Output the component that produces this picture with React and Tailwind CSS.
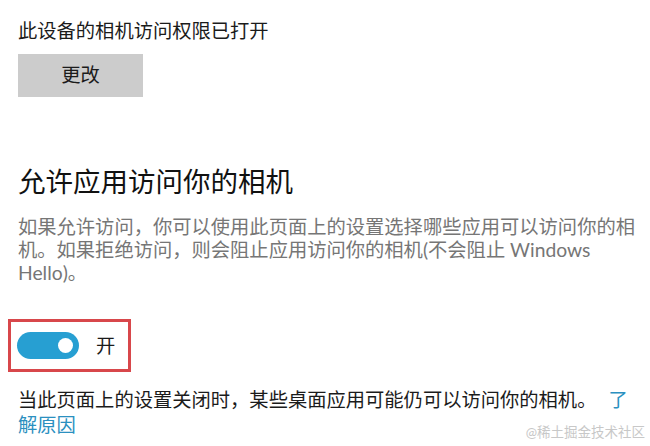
import React from 'react';

const FONT = "font-['Lato','Noto_Sans_CJK_SC',sans-serif]";

const Toggle = ({ on }) => (
  <div
    className={`flex items-center w-[62px] h-[27px] rounded-full px-[6px] ${
      on ? 'bg-[#279fd2] justify-end' : 'bg-white border-2 border-black justify-start'
    }`}
  >
    <div className="w-[15px] h-[15px] rounded-full bg-white" />
  </div>
);

const App = () => {
  return (
    <div className={`relative w-[650px] h-[446px] bg-white overflow-hidden ${FONT}`}>
      <div className="px-[18px] pt-[17px]">
        <p className="text-[19.3px] leading-[28px] text-[#1b1b1b]">此设备的相机访问权限已打开</p>
        <button className="mt-[9px] w-[125px] h-[43px] bg-[#cccccc] text-[19.3px] text-[#1b1b1b] flex items-center justify-center">
          更改
        </button>

        <h2 className="mt-[67px] text-[27.5px] leading-[36px] text-[#111111]">允许应用访问你的相机</h2>
        <p className="mt-[15px] w-[622px] text-[19.3px] leading-[23px] text-[#767676]">
          如果允许访问，你可以使用此页面上的设置选择哪些应用可以访问你的相机。如果拒绝访问，则会阻止应用访问你的相机(不会阻止 Windows Hello)。
        </p>

        <div className="mt-[35px] -ml-[10px] w-[123px] h-[53px] border-[3px] border-[#d8474b] flex items-center pl-[6px]">
          <Toggle on />
          <span className="ml-[17px] text-[19.3px] leading-none text-[#1b1b1b]">开</span>
        </div>

        <p className="mt-[15px] w-[622px] text-[19.3px] leading-[25px] text-[#1b1b1b]">
          当此页面上的设置关闭时，某些桌面应用可能仍可以访问你的相机。
          <a href="#" className="ml-[12px] text-[#2b90c0]">
            <span>了</span><span>解原因</span>
          </a>
        </p>
      </div>

      <span className="absolute right-[5px] top-[424px] text-[13.5px] leading-[16px] text-[#c8c8c8]">
        @稀土掘金技术社区
      </span>
    </div>
  );
};

export default App;
